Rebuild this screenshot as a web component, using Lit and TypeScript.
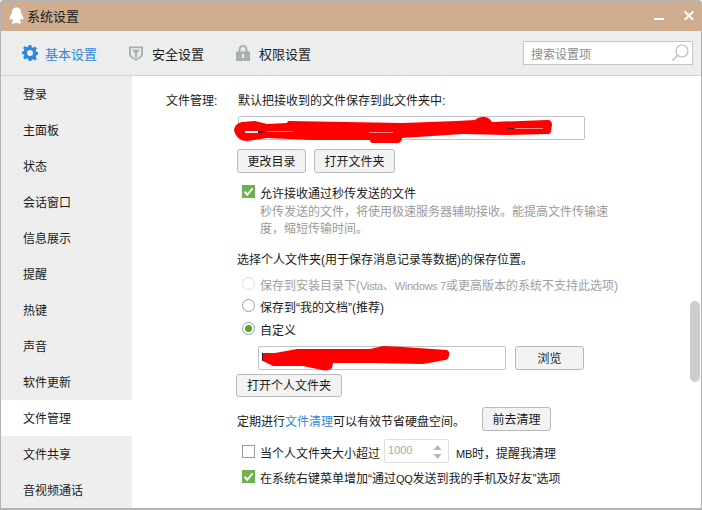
import { LitElement, html, css, svg } from "lit";
import { customElement } from "lit/decorators.js";

const NAV = ["登录","主面板","状态","会话窗口","信息展示","提醒","热键","声音","软件更新","文件管理","文件共享","音视频通话"];

const check = html`<svg class="cb" width="13" height="13" viewBox="0 0 13 13"><rect width="13" height="13" fill="#6fb04f"/><path d="M2.500 6.800 5.300 9.800 10.600 3.400" fill="none" stroke="#fff" stroke-width="2"/></svg>`;

@customElement("app-root")
export class AppRoot extends LitElement {
  static styles = css`
    :host { display: block; width: 702px; height: 510px; font-family: "Liberation Sans", "Noto Sans CJK SC", sans-serif; font-size: 12px; color: #1a1a1a; }
    * { box-sizing: border-box; }
    .win { position: relative; width: 702px; height: 510px; border: 1px solid #b4b4b4; border-bottom-width: 2px; border-radius: 3px 3px 0 0; background: #fff; display: flex; flex-direction: column; overflow: hidden; }
    .title { flex: none; height: 30px; background: #d0ad8f; display: flex; align-items: center; padding: 0 0 2px 8px; font-size: 13px; gap: 3px; }
    .title .sp { flex: 1; }
    .winbtns { display: flex; align-items: center; gap: 20px; padding-right: 7px; }
    .toolbar { flex: none; height: 45px; background: #eceeed; border-bottom: 1px solid #d6d6d6; display: flex; align-items: center; padding-left: 21px; font-size: 13px; }
    .tab { display: flex; align-items: center; gap: 9px; margin-right: 32px; }
    .tab.on { color: #2e87d8; gap: 7px; }
    .search { margin-left: auto; margin-right: 8px; width: 170px; height: 24px; background: #fff; border: 1px solid #c6c6c6; display: flex; align-items: center; justify-content: space-between; padding: 0 3px 0 7px; color: #8a8a8a; font-size: 12px; }
    .body { flex: 1; display: flex; min-height: 0; }
    .side { flex: none; width: 131px; background: #eeeeee; }
    .nav { height: 36px; line-height: 38px; padding-left: 22px; }
    .nav.on { background: #fff; }
    .main { flex: 1; display: flex; padding: 15px 0 0 34px; }
    .lbl { flex: none; width: 71px; height: 18px; line-height: 20px; }
    .form { display: flex; flex-direction: column; }
    .line { height: 18px; line-height: 20px; white-space: nowrap; }
    .first { padding-left: 1px; }
    .input { height: 24px; background: #fff; border: 1px solid #c4c4c4; border-radius: 2px; }
    .btn { height: 24px; line-height: 24px; border: 1px solid #b9b9b9; border-radius: 3px; background: #f3f3f3; text-align: center; flex: none; }
    .row { display: flex; align-items: center; white-space: nowrap; }
    .row > span { padding-top: 2px; }
    .la { font-size: 11px; letter-spacing: -0.3px; }
    .path1 { width: 347px; margin: 7px 0 0 1px; }
    .btns1 { margin-top: 9px; gap: 8px; }
    .w69 { width: 69px; }
    .w81 { width: 81px; }
    .w106 { width: 106px; }
    .opt { height: 18px; padding-left: 5px; gap: 5px; }
    .cb { flex: none; display: block; }
    .o1 { margin-top: 9px; }
    .desc { margin: 4px 0 0 23px; color: #9a9a9a; line-height: 17px; width: 352px; }
    .head { margin-top: 12px; }
    .r1 { margin-top: 6px; color: #a0a0a0; }
    .r2 { margin-top: 4px; }
    .r3 { margin-top: 5px; }
    .browse { margin: 9px 0 0 21px; gap: 9px; }
    .path2 { width: 248px; }
    .open { margin: 4px 0 0 -1px; height: 23px; line-height: 23px; }
    .clean { margin-top: 10px; }
    .clean .go { margin-left: 17px; }
    a { color: #2e87d8; text-decoration: none; }
    .o2 { height: 24px; margin-top: 8px; }
    .spin { width: 65px; height: 24px; border: 1px solid #dedede; border-radius: 2px; margin: 0 2px 0 -1px; display: flex; justify-content: space-between; padding: 2px 6px 0 3px; color: #a8a8a8; font-size: 11px; line-height: 16px; }
    .spin svg { margin-top: 2px; }
    .o3 { margin-top: 4px; }
    .box { flex: none; width: 13px; height: 13px; border: 1px solid #9c9c9c; background: #fff; }
    .scroll { position: absolute; left: 689px; top: 300px; width: 10px; height: 81px; background: #cdcdcd; border-radius: 5px; }
    .scrib { position: absolute; left: 0; top: 0; pointer-events: none; }
  `;

  radio(on: boolean, dis = false) {
    return html`<svg class="cb" width="13" height="13" viewBox="0 0 13 13"><circle cx="6.500" cy="6.500" r="6" fill="#fff" stroke="${dis ? "#dcdcdc" : "#9a9a9a"}"/>${on ? svg`<circle cx="6.500" cy="6.500" r="3.500" fill="#55a630"/>` : ""}</svg>`;
  }

  render() {
    return html`<div class="win">
      <div class="title">
        <svg width="15" height="17" viewBox="1.500 1 15 17"><path d="M9 1.500C5.600 1.500 4.400 4.200 4.300 7.200 3 9 1.800 11.200 2.200 13.600c.5.600 1.300-.4 2-1.300.3 1.300.9 2.300 1.700 3-1.100.4-1.900 1-1.600 1.700.5.900 3.200.7 4.700.1 1.500.6 4.200.8 4.700-.1.3-.7-.5-1.300-1.600-1.700.8-.7 1.400-1.700 1.700-3 .7.9 1.500 1.900 2 1.300.4-2.400-.8-4.600-2.100-6.400C13.600 4.200 12.400 1.500 9 1.500Z" fill="#fff"/></svg>
        <span>系统设置</span><span class="sp"></span>
        <div class="winbtns">
          <svg width="10" height="10" viewBox="0 0 10 10"><rect y="8" width="10" height="2" fill="#fff"/></svg>
          <svg width="10" height="10" viewBox="0 0 10 10"><path d="M.7 1.500 9.300 10M9.300 1.500.7 10" stroke="#fff" stroke-width="2"/></svg>
        </div>
      </div>
      <div class="toolbar">
        <div class="tab on">
          <svg width="16" height="16" viewBox="0 0 24 24"><path fill="#2e87d8" fill-rule="evenodd" d="M10 0h4l.7 3.400 2 .8 2.900-1.900 2.800 2.800-1.900 2.900.8 2 3.400.7v4l-3.400.7-.8 2 1.900 2.900-2.800 2.800-2.900-1.900-2 .8L14 24h-4l-.7-3.400-2-.8-2.900 1.900-2.800-2.800 1.900-2.900-.8-2L-.7 14v-4l3.400-.7.8-2-1.900-2.900 2.800-2.800 2.900 1.900 2-.8ZM12 7.500a4.500 4.500 0 1 0 0 9 4.500 4.500 0 0 0 0-9Z"/></svg>
          <span>基本设置</span>
        </div>
        <div class="tab">
          <svg width="14" height="16" viewBox="0 0 15 16"><path fill="#a9aeb0" d="M0 1h15v8c0 3-3.500 5.500-7.500 7C3.500 14.500 0 12 0 9Z"/><path fill="#e9ebea" d="M2 3h11v6c0 2-2.500 4-5.500 5.300C4.500 13 2 11 2 9Z"/><path fill="#a9aeb0" d="M3.500 4.500h8L8.500 8.500V13h-2V8.500Z"/></svg>
          <span>安全设置</span>
        </div>
        <div class="tab">
          <svg width="14" height="16" viewBox="0 0 14 16"><path fill="none" stroke="#a9aeb0" stroke-width="2" d="M3.500 7V4.500a3.500 3.500 0 0 1 7 0V7"/><rect y="6.500" width="14" height="9.500" fill="#a9aeb0"/><rect x="6" y="9" width="2" height="4" fill="#eceeed"/></svg>
          <span>权限设置</span>
        </div>
        <div class="search"><span>搜索设置项</span>
          <svg width="18" height="18" viewBox="0 0 18 18"><circle cx="11" cy="7" r="6" fill="none" stroke="#bdbdbd" stroke-width="1.200"/><path d="M6.500 11.500 1.500 16.500" stroke="#bdbdbd" stroke-width="1.600"/></svg>
        </div>
      </div>
      <div class="body">
        <div class="side">${NAV.map((n) => html`<div class="nav ${n === "文件管理" ? "on" : ""}">${n}</div>`)}</div>
        <div class="main">
          <div class="lbl">文件管理:</div>
          <div class="form">
            <div class="line first">默认把接收到的文件保存到此文件夹中:</div>
            <div class="input path1"></div>
            <div class="row btns1"><div class="btn w69">更改目录</div><div class="btn w81">打开文件夹</div></div>
            <div class="row opt o1">${check}<span>允许接收通过秒传发送的文件</span></div>
            <div class="desc">秒传发送的文件，将使用极速服务器辅助接收。能提高文件传输速度，缩短传输时间。</div>
            <div class="line head">选择个人文件夹(用于保存消息记录等数据)的保存位置。</div>
            <div class="row opt r1">${this.radio(false, true)}<span>保存到安装目录下(<span class="la">Vista</span>、<span class="la">Windows 7</span>或更高版本的系统不支持此选项)</span></div>
            <div class="row opt r2">${this.radio(false)}<span>保存到“我的文档”(推荐)</span></div>
            <div class="row opt r3">${this.radio(true)}<span>自定义</span></div>
            <div class="row browse"><div class="input path2"></div><div class="btn w69">浏览</div></div>
            <div class="row"><div class="btn w106 open">打开个人文件夹</div></div>
            <div class="row clean"><span>定期进行<a>文件清理</a>可以有效节省硬盘空间。</span><div class="btn w69 go">前去清理</div></div>
            <div class="row opt o2"><div class="box"></div><span>当个人文件夹大小超过</span>
              <div class="spin"><span>1000</span><svg width="9" height="16" viewBox="0 0 9 16"><path d="M4.500 1 8.500 6h-8ZM4.500 15 .5 10h8Z" fill="#b5b5b5"/></svg></div>
              <span><span class="la">MB</span>时，提醒我清理</span></div>
            <div class="row opt o3">${check}<span>在系统右键菜单增加“通过<span class="la">QQ</span>发送到我的手机及好友”选项</span></div>
          </div>
        </div>
      </div>
      <div class="scroll"></div>
      <svg class="scrib" width="700" height="507" viewBox="1 1 700 507">
        <path fill="#f00" d="M234 130C235 124 240 122 243 122L255 121 267 124 287 123 288 121 403 123 457 121 475 120C477 118 480 117 483 117 488 117 490 119 492 122L547 120C551 120 552 122 552 125L551 131C551 133 550 134 548 134L507 135 463 134 402 138C402 141 400 143 397 143L373 143C371 143 370 142 370 140L310 140 267 138 247 141C240 141 235 136 234 130Z"/>
        <path fill="#fff" d="M245 131h13v2h-13Z"/>
        <path fill="#222" d="M258 131h5v2h-5ZM508 128h6v1h-6Z"/>
        <path fill="#f88" d="M267 131h26v1h-26ZM515 128h28v1h-28ZM369 132h24v1h-24Z"/>
        <path fill="#222" d="M262 353h1v8h-1Z"/>
        <path fill="#f00" d="M263 353 275 353 297 349 370 349 383 346 403 347 447 350C449 351 450 353 449 355 449 358 447 360 445 360L423 364 373 363 333 363 332 368C330 370 326 371 322 370L303 366 273 366 263 361Z"/>
      </svg>
    </div>`;
  }
}
